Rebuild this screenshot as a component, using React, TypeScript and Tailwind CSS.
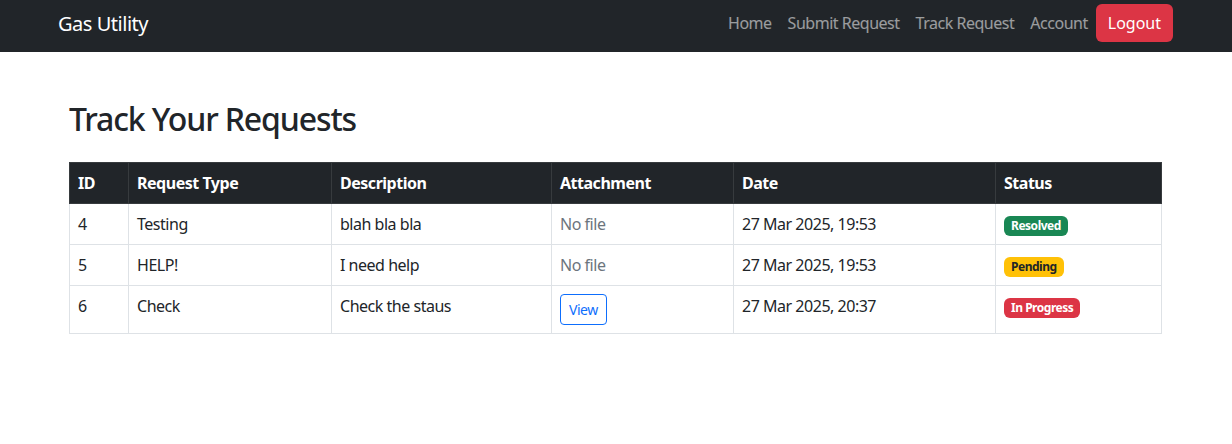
import React from "react"

const FONT = { fontFamily: '"Noto Sans", "Open Sans", sans-serif' }

const ROWS = [
  { id: 4, type: "Testing", desc: "blah bla bla", file: false, date: "27 Mar 2025, 19:53", status: "Resolved" },
  { id: 5, type: "HELP!", desc: "I need help", file: false, date: "27 Mar 2025, 19:53", status: "Pending" },
  { id: 6, type: "Check", desc: "Check the staus", file: true, date: "27 Mar 2025, 20:37", status: "In Progress" },
]

function StatusBadge({ status }: { status: string }) {
  const cls =
    status === "Resolved"
      ? "bg-[#198754] text-white"
      : status === "Pending"
        ? "bg-[#ffc107] text-[#212529]"
        : "bg-[#dc3545] text-white"
  return (
    <span className={`inline-block rounded-[6px] px-[7px] py-[4px] text-[12px] font-bold leading-none ${cls}`}>
      {status}
    </span>
  )
}

export default function App() {
  return (
    <div className="min-h-[444px] bg-white tracking-[-0.03em] text-[#212529]" style={FONT}>
      {/* Navbar */}
      <nav className="h-[52px] bg-[#212529]">
        <div className="mx-auto flex h-[52px] max-w-[1140px] items-center justify-between pb-[6px] pl-3 pr-[13px]">
          <a className="pt-[2px] text-[20px] leading-[30px] text-white">Gas Utility</a>
          <ul className="flex items-center">
            {["Home", "Submit Request", "Track Request", "Account"].map((l) => (
              <li key={l}>
                <a className="block px-2 text-[16px] leading-6 text-white/55">{l}</a>
              </li>
            ))}
            <li>
              <button className="rounded-[6px] bg-[#dc3545] px-3 py-[7px] text-[16px] leading-6 tracking-normal text-white">
                Logout
              </button>
            </li>
          </ul>
        </div>
      </nav>

      {/* Content */}
      <div className="mx-auto max-w-[1140px] pl-[23px] pr-[25px] pt-12">
        <h2 className="mb-6 text-[32px] font-medium leading-[38px] tracking-[-0.035em]">Track Your Requests</h2>

        <table className="w-full table-fixed border-collapse text-[16px] leading-6">
          <colgroup>
            <col className="w-[59px]" />
            <col className="w-[203px]" />
            <col className="w-[220px]" />
            <col className="w-[182px]" />
            <col className="w-[262px]" />
            <col className="w-[166px]" />
          </colgroup>
          <thead>
            <tr className="bg-[#212529] text-white">
              {["ID", "Request Type", "Description", "Attachment", "Date", "Status"].map((h) => (
                <th key={h} className="border border-[#373b3e] p-2 text-left font-bold">
                  {h}
                </th>
              ))}
            </tr>
          </thead>
          <tbody>
            {ROWS.map((r) => (
              <tr key={r.id}>
                <td className="border border-[#dee2e6] p-2 align-top">{r.id}</td>
                <td className="border border-[#dee2e6] p-2 align-top">{r.type}</td>
                <td className="border border-[#dee2e6] p-2 align-top">{r.desc}</td>
                <td className="border border-[#dee2e6] p-2 align-top">
                  {r.file ? (
                    <button className="rounded-[4px] border border-[#0d6efd] px-2 py-[4px] text-[14px] leading-[21px] text-[#0d6efd]">
                      View
                    </button>
                  ) : (
                    <span className="text-[#6c757d]">No file</span>
                  )}
                </td>
                <td className="border border-[#dee2e6] p-2 align-top">{r.date}</td>
                <td className="border border-[#dee2e6] p-2 align-top">
                  <StatusBadge status={r.status} />
                </td>
              </tr>
            ))}
          </tbody>
        </table>
      </div>
    </div>
  )
}
